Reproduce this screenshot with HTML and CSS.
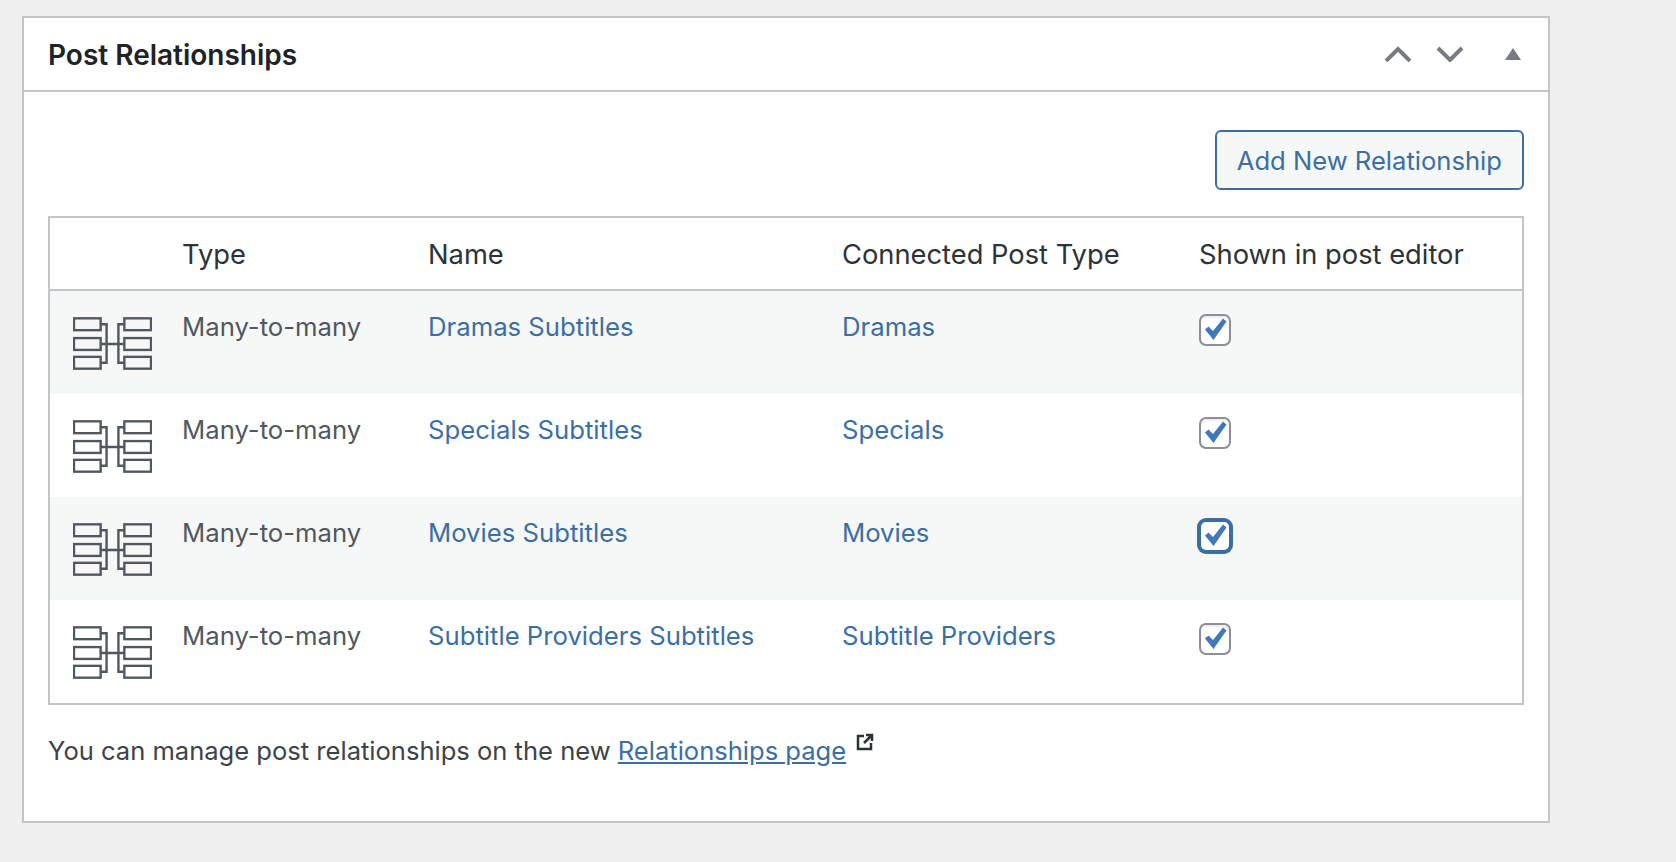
FILE: index.html
```html
<!DOCTYPE html>
<html lang="en">
<head>
    <meta charset="UTF-8">
    <meta name="viewport" content="width=device-width, initial-scale=1.0">
    <title>Post Relationships</title>
    <link rel="stylesheet" href="styles.css">
</head>
<body>
    <svg class="icon-defs" width="0" height="0" aria-hidden="true">
        <symbol id="relationship" viewBox="0 0 80 54">
            <g fill="none" stroke="currentColor" stroke-width="2.400">
                <rect x="1" y="1" width="27" height="12"/>
                <rect x="1" y="21" width="27" height="12"/>
                <rect x="1" y="40" width="27" height="12"/>
                <rect x="52" y="1" width="27" height="12"/>
                <rect x="52" y="21" width="27" height="12"/>
                <rect x="52" y="40" width="27" height="12"/>
                <path d="M28 7h6v39h-6M28 27h24M52 7h-6v39h6"/>
            </g>
        </symbol>
        <symbol id="check" viewBox="0 0 32 32">
            <path d="M6 15.500l3.500-3 4.500 4.500L24 4.500l3.500 3L14.500 26z" fill="currentColor"/>
        </symbol>
    </svg>

    <div class="postbox">
        <div class="postbox-header">
            <h2>Post Relationships</h2>
            <div class="handle-actions">
                <svg class="handle up" viewBox="0 0 28 16"><path d="M2 15L14 3l12 12" /></svg>
                <svg class="handle down" viewBox="0 0 28 16"><path d="M2 2l12 12L26 2" /></svg>
                <svg class="toggle" viewBox="0 0 16 12"><path d="M8 0l8 12H0z"/></svg>
            </div>
        </div>
        <div class="inside">
            <div class="table-actions">
                <a class="button" href="#">Add New Relationship</a>
            </div>
            <table class="relationships">
                <thead>
                    <tr>
                        <th class="col-icon"></th>
                        <th class="col-type">Type</th>
                        <th class="col-name">Name</th>
                        <th class="col-post">Connected Post Type</th>
                        <th>Shown in post editor</th>
                    </tr>
                </thead>
                <tbody>
                    <tr class="alt">
                        <td class="col-icon"><svg class="rel-icon"><use href="#relationship"/></svg></td>
                        <td>Many-to-many</td>
                        <td><a href="#">Dramas Subtitles</a></td>
                        <td><a href="#">Dramas</a></td>
                        <td><span class="checkbox"><svg><use href="#check"/></svg></span></td>
                    </tr>
                    <tr>
                        <td class="col-icon"><svg class="rel-icon"><use href="#relationship"/></svg></td>
                        <td>Many-to-many</td>
                        <td><a href="#">Specials Subtitles</a></td>
                        <td><a href="#">Specials</a></td>
                        <td><span class="checkbox"><svg><use href="#check"/></svg></span></td>
                    </tr>
                    <tr class="alt">
                        <td class="col-icon"><svg class="rel-icon"><use href="#relationship"/></svg></td>
                        <td>Many-to-many</td>
                        <td><a href="#">Movies Subtitles</a></td>
                        <td><a href="#">Movies</a></td>
                        <td><span class="checkbox focused"><svg><use href="#check"/></svg></span></td>
                    </tr>
                    <tr>
                        <td class="col-icon"><svg class="rel-icon"><use href="#relationship"/></svg></td>
                        <td>Many-to-many</td>
                        <td><a href="#">Subtitle Providers Subtitles</a></td>
                        <td><a href="#">Subtitle Providers</a></td>
                        <td><span class="checkbox"><svg><use href="#check"/></svg></span></td>
                    </tr>
                </tbody>
            </table>
            <p class="note">You can manage post relationships on the new <a href="#">Relationships page</a>
                <svg class="external" viewBox="0 0 20 20"><path d="M9 4H3v13h13v-6M11 3h6v6M17 3L9 11"/></svg>
            </p>
        </div>
    </div>
</body>
</html>
```

FILE: styles.css
```css
body {
    margin: 0;
    padding: 16px 126px 0 22px;
    background: #efefef;
    font-family: Inter, "Liberation Sans", sans-serif;
    font-size: 25.7px;
    color: #50575e;
}

a {
    color: #3a6ea5;
    text-decoration: none;
}

.icon-defs {
    position: absolute;
}

.postbox {
    background: #fff;
    border: 2px solid #c3c4c7;
    height: 807px;
    box-sizing: border-box;
}

.postbox-header {
    display: flex;
    align-items: center;
    justify-content: space-between;
    height: 72px;
    padding: 0 27px 0 24px;
    border-bottom: 2px solid #c3c4c7;
}

.postbox-header h2 {
    margin: 2px 0 0;
    font-size: 28px;
    font-weight: 600;
    color: #1d2327;
}

.handle-actions {
    display: flex;
    align-items: center;
    gap: 24px;
    color: #787c82;
}

.handle {
    width: 28px;
    height: 16px;
    fill: none;
    stroke: #787c82;
    stroke-width: 4;
}

.toggle {
    width: 16px;
    height: 12px;
    margin-left: 17px;
    fill: #787c82;
}

.inside {
    padding: 38px 24px 0 24px;
}

.table-actions {
    display: flex;
    justify-content: flex-end;
    margin-bottom: 26px;
}

.button {
    display: block;
    box-sizing: border-box;
    height: 60px;
    line-height: 57px;
    padding: 0 20px;
    font-size: 25.6px;
    background: #f6f7f7;
    border: 2px solid #3a6ea5;
    border-radius: 6px;
}

.relationships {
    width: 100%;
    border: 2px solid #c3c4c7;
    border-collapse: separate;
    border-spacing: 0;
    table-layout: fixed;
}

.relationships th {
    height: 73px;
    padding: 2px 0 0;
    box-sizing: border-box;
    text-align: left;
    font-size: 27.3px;
    font-weight: 400;
    color: #2c3338;
    border-bottom: 2px solid #c3c4c7;
}

.relationships td {
    height: 103px;
    padding: 21px 0 0 0;
    box-sizing: border-box;
    vertical-align: top;
    line-height: 29px;
}

.alt td {
    background: #f6f7f7;
}

.col-icon {
    width: 132px;
}

.col-type {
    width: 246px;
}

.col-name {
    width: 414px;
}

.col-post {
    width: 357px;
}

.relationships td.col-icon {
    padding: 26px 0 0 23px;
}

.rel-icon {
    display: block;
    width: 79px;
    height: 54px;
    color: #50575e;
}

.checkbox {
    display: block;
    position: relative;
    box-sizing: border-box;
    width: 32px;
    height: 32px;
    margin-top: 2px;
    border: 2px solid #8c8f94;
    border-radius: 7px;
    background: #fff;
    box-shadow: inset 0 2px 2px rgba(0, 0, 0, 0.08);
    color: #4278b8;
}

.checkbox svg {
    position: absolute;
    top: -2px;
    left: -2px;
    width: 32px;
    height: 32px;
}

.checkbox.focused {
    border-color: #3a6ea5;
    box-shadow: 0 0 0 2px #3a6ea5;
}

.note {
    margin: 27px 0 0;
    line-height: 36px;
    font-size: 25.55px;
    color: #3c434a;
}

.note a {
    text-decoration: underline;
}

.external {
    width: 20px;
    height: 20px;
    margin-left: 2px;
    vertical-align: 8px;
    fill: none;
    stroke: #2c3338;
    stroke-width: 2.500;
}
```
